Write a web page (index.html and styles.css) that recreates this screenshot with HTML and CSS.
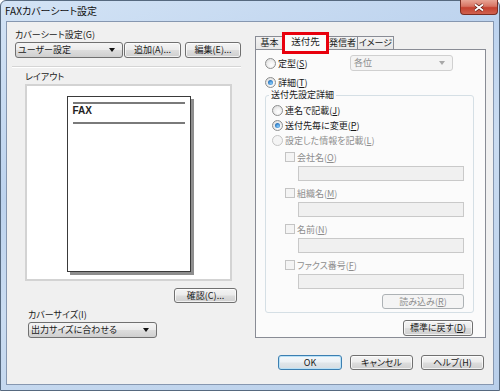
FILE: index.html
```html
<!DOCTYPE html>
<html lang="ja">
<head>
    <meta charset="UTF-8">
    <title>FAXカバーシート設定</title>
    <link rel="stylesheet" href="styles.css">
</head>
<body>
    <div class="window">
        <div class="titlebar">
            <span class="title">FAXカバーシート設定</span>
            <span class="close-btn">
                <svg width="12" height="9" viewBox="0 0 12 9"><path d="M2 1.5 L10 7.5 M10 1.5 L2 7.5" stroke="#5a1a12" stroke-width="3.2"/><path d="M2 1.5 L10 7.5 M10 1.5 L2 7.5" stroke="#fff" stroke-width="1.8"/></svg>
            </span>
        </div>

        <div class="client">
            <div class="main">
                <!-- left: cover sheet + preview -->
                <div class="left-col">
                    <div class="label label-top">カバーシート設定(G)</div>
                    <div class="cover-row">
                        <div class="combo combo-user"><span>ユーザー設定</span><span class="arrow"></span></div>
                        <button class="btn btn-add">追加(A)...</button>
                        <button class="btn btn-edit">編集(E)...</button>
                    </div>
                    <div class="separator"></div>
                    <div class="label label-layout">レイアウト</div>
                    <div class="layout-box">
                        <div class="page">
                            <div class="page-rule"></div>
                            <div class="page-fax">FAX</div>
                            <div class="page-rule"></div>
                        </div>
                    </div>
                    <button class="btn btn-confirm">確認(C)...</button>
                    <div class="label label-size">カバーサイズ(I)</div>
                    <div class="combo combo-size"><span>出力サイズに合わせる</span><span class="arrow"></span></div>
                </div>

                <!-- right: tabs -->
                <div class="right-col">
                    <div class="tabs">
                        <div class="tab tab-basic">基本</div>
                        <div class="tab tab-active">送付先</div>
                        <div class="tab tab-sender">発信者</div>
                        <div class="tab tab-image">イメージ</div>
                    </div>
                    <div class="tab-panel">
                        <div class="opt-row">
                            <div class="opt"><span class="radio"></span>定型(<u>S</u>)</div>
                            <div class="combo combo-fixed disabled"><span>各位</span><span class="arrow"></span></div>
                        </div>
                        <div class="opt-row opt-detail">
                            <div class="opt"><span class="radio checked"></span>詳細(<u>T</u>)</div>
                        </div>

                        <div class="group">
                            <div class="group-title">送付先設定詳細</div>
                            <div class="g-radio"><span class="radio"></span>連名で記載(<u>J</u>)</div>
                            <div class="g-radio"><span class="radio checked"></span>送付先毎に変更(<u>P</u>)</div>
                            <div class="g-radio disabled"><span class="radio"></span>設定した情報を記載(<u>L</u>)</div>

                            <div class="g-check disabled"><span class="check"></span>会社名(<u>O</u>)</div>
                            <div class="field"></div>
                            <div class="g-check disabled next"><span class="check"></span>組織名(<u>M</u>)</div>
                            <div class="field"></div>
                            <div class="g-check disabled next"><span class="check"></span>名前(<u>N</u>)</div>
                            <div class="field"></div>
                            <div class="g-check disabled next"><span class="check"></span>ファクス番号(<u>F</u>)</div>
                            <div class="field"></div>

                            <button class="btn btn-read" disabled>読み込み(<u>R</u>)</button>
                        </div>

                        <button class="btn btn-reset">標準に戻す(<u>D</u>)</button>
                    </div>
                </div>
            </div>

            <div class="footer">
                <button class="btn btn-ok">OK</button>
                <button class="btn btn-cancel">キャンセル</button>
                <button class="btn btn-help">ヘルプ(H)</button>
            </div>
        </div>
    </div>
</body>
</html>
```

FILE: styles.css
```css
body {
    margin: 0;
    background: #fff;
    font-family: "Noto Sans CJK JP", "Liberation Sans", sans-serif;
    font-size: 9px;
    color: #1a1a1a;
    font-feature-settings: "palt";
}
.window {
    width: 500px;
    height: 391px;
    box-sizing: border-box;
    border: 1px solid #56697f;
    border-radius: 6px 6px 0 0;
    padding: 0 5px 5px;
    background: linear-gradient(160deg, #d3e3f5 0%, #bdd3ee 35%, #cadcf1 55%, #b9cfea 100%);
    display: flex;
    flex-direction: column;
}
.titlebar {
    height: 20px;
    margin: 0 -5px;
    display: flex;
    justify-content: space-between;
    align-items: flex-start;
}
.title {
    padding: 3px 0 0 4px;
    font-size: 10px;
    line-height: 13px;
    color: #111;
}
.close-btn {
    width: 38px;
    height: 15px;
    margin: -1px 1px 0 0;
    box-sizing: border-box;
    border: 1px solid #7b2d22;
    border-top: none;
    border-radius: 0 0 4px 4px;
    background: linear-gradient(#e8a595 0%, #d77463 45%, #c4412f 55%, #d0614e 100%);
    display: flex;
    justify-content: center;
    align-items: center;
}
.client {
    flex: 1;
    border: 1px solid #8697b0;
    background: #f0f0f0;
    padding: 7px 7px 0 5px;
}
.main {
    display: flex;
    gap: 14px;
    height: 309px;
}

/* generic controls */
.label {
    height: 12px;
    line-height: 12px;
}
.btn {
    height: 16px;
    box-sizing: border-box;
    border: 1px solid #707070;
    border-radius: 3px;
    background: linear-gradient(#f4f4f4 0%, #ebebeb 48%, #dddddd 52%, #cfcfcf 100%);
    box-shadow: inset 0 0 0 1px rgba(255,255,255,0.7);
    font: inherit;
    color: #1a1a1a;
    padding: 0;
    line-height: 14px;
}
.btn:disabled {
    border-color: #adb2b5;
    background: #f4f4f4;
    box-shadow: none;
    color: #8d8d8d;
}
.combo {
    height: 16px;
    box-sizing: border-box;
    border: 1px solid #707070;
    border-radius: 3px;
    background: linear-gradient(#f4f4f4 0%, #ebebeb 48%, #dddddd 52%, #cfcfcf 100%);
    display: flex;
    align-items: center;
    padding: 0 7px 0 2px;
    line-height: 14px;
}
.arrow {
    margin-left: auto;
    width: 0;
    height: 0;
    border-left: 3.5px solid transparent;
    border-right: 3.5px solid transparent;
    border-top: 4px solid #111;
}
.combo.disabled {
    border-color: #d0d0d0;
    background: #f4f4f4;
    color: #8d8d8d;
}
.combo.disabled .arrow {
    border-top-color: #a8a8a8;
}
.radio {
    width: 11px;
    height: 11px;
    box-sizing: border-box;
    border-radius: 50%;
    border: 1px solid #8e8f8f;
    background: radial-gradient(circle at 60% 65%, #fff 0%, #f2f2f2 40%, #d4d4d4 100%);
    display: inline-flex;
    justify-content: center;
    align-items: center;
    margin-right: 2px;
}
.radio.checked::after {
    content: "";
    width: 5px;
    height: 5px;
    border-radius: 50%;
    background: radial-gradient(circle at 60% 65%, #8ecdf5 0%, #3b8ad3 50%, #1c4f86 100%);
}
.check {
    width: 10px;
    height: 10px;
    box-sizing: border-box;
    border: 1px solid #8e8f8f;
    background: linear-gradient(135deg, #dcdcdc, #fff);
    margin-right: 2px;
}
.disabled {
    color: #8d8d8d;
}
.disabled .radio,
.disabled .check {
    border-color: #c4c4c4;
    background: #f4f4f4;
}

/* left column */
.left-col {
    width: 229px;
    display: flex;
    flex-direction: column;
}
.label-top {
    padding-left: 3px;
}
.cover-row {
    display: flex;
    margin-top: 1px;
}
.combo-user {
    width: 108px;
    margin-left: 3px;
}
.btn-add {
    width: 57px;
    margin-left: 1px;
}
.btn-edit {
    width: 56px;
    margin-left: 4px;
}
.separator {
    margin-top: 8px;
    height: 0;
    border-top: 1px solid #d5d5d5;
    border-bottom: 1px solid #fff;
}
.label-layout {
    margin-top: 3px;
    padding-left: 13px;
}
.layout-box {
    margin: 1px 0 0 13px;
    width: 207px;
    height: 199px;
    box-sizing: border-box;
    border: 2px solid #d3d3d3;
    background: #fff;
    padding-top: 10px;
    display: flex;
    justify-content: center;
    align-items: flex-start;
}
.page {
    width: 124px;
    height: 176px;
    box-sizing: border-box;
    border: 1px solid #3a3a3a;
    box-shadow: 3px 3px 0 #8e8e8e;
    background: #fff;
    padding: 5px 5px 0;
}
.page-rule {
    height: 2px;
    background: #7a7a7a;
}
.page-fax {
    font-family: "Liberation Sans", sans-serif;
    font-weight: bold;
    font-size: 10px;
    line-height: 14px;
    height: 18px;
    color: #222;
}
.btn-confirm {
    align-self: flex-end;
    width: 63px;
    height: 15px;
    margin: 7px 4px 0 0;
    line-height: 13px;
}
.label-size {
    margin-top: 6px;
    padding-left: 16px;
}
.combo-size {
    width: 129px;
    margin: 1px 0 0 16px;
}

/* right column */
.right-col {
    width: 231px;
}
.tabs {
    margin-top: 4px;
    height: 16px;
    display: flex;
    align-items: flex-end;
}
.tab {
    height: 13px;
    box-sizing: border-box;
    border: 1px solid #898c95;
    border-bottom: none;
    background: linear-gradient(#f3f3f3, #e6e6e6);
    text-align: center;
    line-height: 12px;
}
.tab-basic {
    width: 29px;
}
.tab-active {
    position: relative;
    z-index: 2;
    width: 47px;
    height: 17px;
    margin: 0 0 -1px -2px;
    background: #fbfbfb;
    line-height: 15px;
    font-size: 9.5px;
}
.tab-active::after {
    content: "";
    position: absolute;
    left: -1px;
    top: -2px;
    width: 47px;
    height: 22px;
    box-sizing: border-box;
    border: 3px solid #e8000d;
}
.tab-sender {
    width: 31px;
    margin-left: -2px;
    text-align: left;
    padding-left: 1px;
}
.tab-image {
    width: 37px;
    margin-left: -1px;
}
.tab-panel {
    height: 289px;
    box-sizing: border-box;
    border: 1px solid #898c95;
    background: #fbfbfb;
    display: flex;
    flex-direction: column;
}
.opt-row {
    display: flex;
    align-items: center;
    margin-top: 5px;
    height: 16px;
    padding-left: 9px;
}
.opt {
    width: 85px;
    display: flex;
    align-items: center;
}
.opt-detail {
    height: 12px;
}
.combo-fixed {
    width: 103px;
    padding-left: 3px;
}
.group {
    margin: 7px 0 0 9px;
    width: 209px;
    height: 218px;
    box-sizing: border-box;
    border: 1px solid #d5dfe5;
    border-radius: 3px;
    display: flex;
    flex-direction: column;
}
.group-title {
    align-self: flex-start;
    margin: -7px 0 0 3px;
    padding: 0 2px;
    height: 12px;
    line-height: 12px;
    background: #fbfbfb;
}
.g-radio {
    display: flex;
    align-items: center;
    height: 15px;
    padding-left: 6px;
}
.group-title + .g-radio {
    margin-top: 2px;
}
.g-check {
    display: flex;
    align-items: center;
    height: 12px;
    margin-top: 3px;
    padding-left: 19px;
}
.g-check.next {
    margin-top: 6px;
}
.field {
    margin: 3px 0 0 32px;
    width: 166px;
    height: 15px;
    box-sizing: border-box;
    border: 1px solid #c9c9c9;
    background: #f0f0f0;
}
.btn-read {
    align-self: flex-end;
    width: 82px;
    height: 15px;
    margin: 5px 9px 0 0;
    line-height: 13px;
}
.btn-reset {
    align-self: flex-end;
    width: 70px;
    margin: 7px 12px 0 0;
}

/* bottom buttons */
.footer {
    display: flex;
    justify-content: flex-end;
    gap: 8px;
    margin-top: 17px;
    padding-right: 2px;
}
.footer .btn {
    width: 63px;
    height: 15px;
    line-height: 13px;
}
.footer .btn-ok {
    width: 64px;
    border-color: #3c7fb1;
    box-shadow: inset 0 0 0 1px #b9e1f7;
    background: linear-gradient(#f4f8fb 0%, #ecf1f5 48%, #e0e6ea 52%, #d6dde2 100%);
}
```
